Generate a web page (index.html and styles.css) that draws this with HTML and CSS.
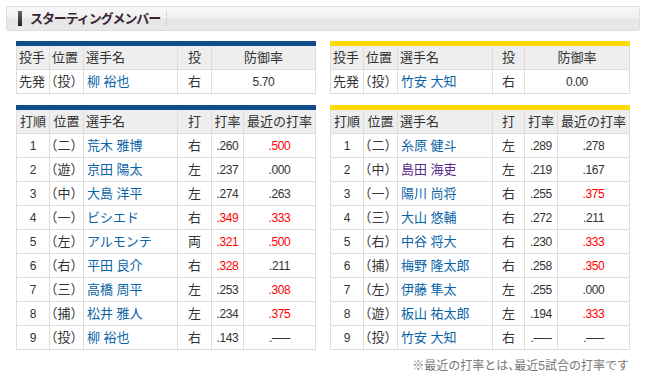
FILE: index.html
```html
<!DOCTYPE html>
<html lang="ja">
<head>
<meta charset="utf-8">
<link rel="stylesheet" href="styles.css">
</head>
<body>
<div class="page">
  <div class="title-box">
    <span class="title-bar"></span>
    <span class="title-text">スターティングメンバー</span>
    <span class="title-sep"></span>
  </div>
  <div class="cols">
    <div class="col">
      <div class="bar bar-blue"></div>
      <table class="tbl">
        <tr>
          <th class="w33 l">投手</th><th class="w34 l">位置</th><th class="w94 l">選手名</th><th class="w34">投</th><th class="w104">防御率</th>
        </tr>
        <tr>
          <td class="l">先発</td><td class="pos">（投）</td><td class="name">柳 裕也</td><td>右</td><td class="num">5.70</td>
        </tr>
      </table>
      <div class="bar bar-blue gap"></div>
      <table class="tbl">
        <tr>
          <th class="w33">打順</th><th class="w34">位置</th><th class="w94 l">選手名</th><th class="w34">打</th><th class="w32">打率</th><th class="w72">最近の打率</th>
        </tr>
        <tr><td class="num">1</td><td class="pos">（二）</td><td class="name">荒木 雅博</td><td>右</td><td class="num">.260</td><td class="num red">.500</td></tr>
        <tr><td class="num">2</td><td class="pos">（遊）</td><td class="name">京田 陽太</td><td>左</td><td class="num">.237</td><td class="num">.000</td></tr>
        <tr><td class="num">3</td><td class="pos">（中）</td><td class="name">大島 洋平</td><td>左</td><td class="num">.274</td><td class="num">.263</td></tr>
        <tr><td class="num">4</td><td class="pos">（一）</td><td class="name">ビシエド</td><td>右</td><td class="num red">.349</td><td class="num red">.333</td></tr>
        <tr><td class="num">5</td><td class="pos">（左）</td><td class="name">アルモンテ</td><td>両</td><td class="num red">.321</td><td class="num red">.500</td></tr>
        <tr><td class="num">6</td><td class="pos">（右）</td><td class="name">平田 良介</td><td>右</td><td class="num red">.328</td><td class="num">.211</td></tr>
        <tr><td class="num">7</td><td class="pos">（三）</td><td class="name">高橋 周平</td><td>左</td><td class="num">.253</td><td class="num red">.308</td></tr>
        <tr><td class="num">8</td><td class="pos">（捕）</td><td class="name">松井 雅人</td><td>左</td><td class="num">.234</td><td class="num red">.375</td></tr>
        <tr><td class="num">9</td><td class="pos">（投）</td><td class="name">柳 裕也</td><td>右</td><td class="num">.143</td><td class="num">.—–</td></tr>
      </table>
    </div>
    <div class="col">
      <div class="bar bar-yellow"></div>
      <table class="tbl">
        <tr>
          <th class="w33 l">投手</th><th class="w34 l">位置</th><th class="w95 l">選手名</th><th class="w32">投</th><th class="w105">防御率</th>
        </tr>
        <tr>
          <td class="l">先発</td><td class="pos">（投）</td><td class="name">竹安 大知</td><td>右</td><td class="num">0.00</td>
        </tr>
      </table>
      <div class="bar bar-yellow gap"></div>
      <table class="tbl">
        <tr>
          <th class="w33">打順</th><th class="w34">位置</th><th class="w95 l">選手名</th><th class="w32">打</th><th class="w33">打率</th><th class="w72">最近の打率</th>
        </tr>
        <tr><td class="num">1</td><td class="pos">（二）</td><td class="name">糸原 健斗</td><td>左</td><td class="num">.289</td><td class="num">.278</td></tr>
        <tr><td class="num">2</td><td class="pos">（中）</td><td class="name visited">島田 海吏</td><td>左</td><td class="num">.219</td><td class="num">.167</td></tr>
        <tr><td class="num">3</td><td class="pos">（一）</td><td class="name">陽川 尚将</td><td>右</td><td class="num">.255</td><td class="num red">.375</td></tr>
        <tr><td class="num">4</td><td class="pos">（三）</td><td class="name">大山 悠輔</td><td>右</td><td class="num">.272</td><td class="num">.211</td></tr>
        <tr><td class="num">5</td><td class="pos">（右）</td><td class="name">中谷 将大</td><td>右</td><td class="num">.230</td><td class="num red">.333</td></tr>
        <tr><td class="num">6</td><td class="pos">（捕）</td><td class="name">梅野 隆太郎</td><td>右</td><td class="num">.258</td><td class="num red">.350</td></tr>
        <tr><td class="num">7</td><td class="pos">（左）</td><td class="name">伊藤 隼太</td><td>左</td><td class="num">.255</td><td class="num">.000</td></tr>
        <tr><td class="num">8</td><td class="pos">（遊）</td><td class="name">板山 祐太郎</td><td>左</td><td class="num">.194</td><td class="num red">.333</td></tr>
        <tr><td class="num">9</td><td class="pos">（投）</td><td class="name">竹安 大知</td><td>右</td><td class="num">.—–</td><td class="num">.—–</td></tr>
      </table>
      <div class="note">※最近の打率とは、最近5試合の打率です</div>
    </div>
  </div>
</div>
</body>
</html>
```

FILE: styles.css
```css
html, body {
  margin: 0;
  padding: 0;
  background: #fff;
}
body {
  font-family: "Liberation Sans", "Noto Sans CJK JP", sans-serif;
  font-size: 13px;
  color: #333;
  font-feature-settings: "halt";
}
.page {
  padding: 6px 0 0 6px;
  width: 634px;
}
.title-box {
  box-sizing: border-box;
  width: 634px;
  height: 25px;
  border: 1px solid #dcdcdc;
  border-radius: 2px;
  background: linear-gradient(#f8f8f8 0%, #f1f1f1 45%, #e6e6e6 55%, #e9e9e9 100%);
  display: flex;
  align-items: center;
  padding-left: 11px;
}
.title-bar {
  width: 4px;
  height: 15px;
  background: linear-gradient(#666, #222);
}
.title-text {
  margin-left: 8px;
  font-weight: bold;
  font-size: 13px;
  letter-spacing: -1.1px;
  color: #3a2535;
  line-height: 15px;
}
.title-sep {
  margin-left: 6px;
  width: 0;
  height: 15px;
  border-left: 1px dotted #bbb;
}
.cols {
  display: flex;
  gap: 14px;
  padding-left: 10px;
  margin-top: 10px;
}
.col {
  width: 300px;
  display: flex;
  flex-direction: column;
}
.bar {
  height: 5px;
}
.bar.gap {
  margin-top: 11px;
}
.bar-blue { background: #0f4c8c; }
.bar-yellow { background: #ffd900; }
.tbl {
  width: 300px;
  table-layout: fixed;
  border-collapse: separate;
  border-spacing: 0;
  border-left: 1px solid #dddddd;
}
.tbl th, .tbl td {
  box-sizing: border-box;
  height: 24px;
  padding: 0 2px;
  border-right: 1px solid #dddddd;
  border-bottom: 1px solid #dddddd;
  text-align: center;
  font-weight: normal;
  white-space: nowrap;
  overflow: hidden;
  line-height: 16px;
}
.tbl th { background: #eeeeee; }
.tbl td { background: #fff; }
.tbl .l { text-align: left; padding-left: 2px; }
.tbl .pos { text-align: left; padding-left: 1px; }
.tbl .name { text-align: left; padding-left: 3px; color: #0a64a8; }
.tbl .name.visited { color: #5b2a8e; }
.tbl .num { font-size: 12px; letter-spacing: -0.4px; }
.tbl .red { color: #ff0000; }
.w32 { width: 32px; }
.w33 { width: 33px; }
.w34 { width: 34px; }
.w72 { width: 72px; }
.w94 { width: 94px; }
.w95 { width: 95px; }
.w104 { width: 104px; }
.w105 { width: 105px; }
.note {
  margin-top: 6px;
  text-align: right;
  font-size: 12px;
  color: #777;
  padding-right: 1px;
}
```
